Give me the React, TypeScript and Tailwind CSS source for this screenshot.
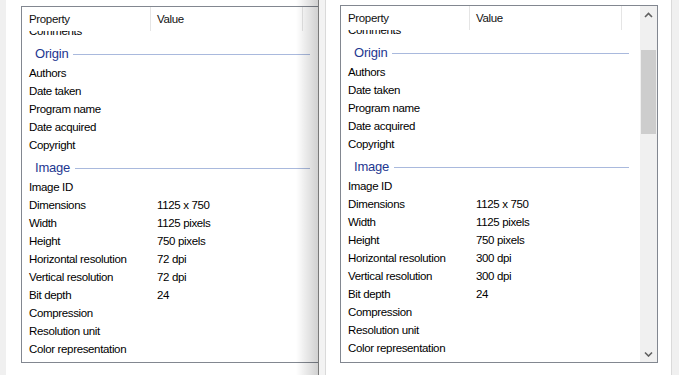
import React from "react";

type Row = { k: string; v?: string } | { group: string };

function rows(res: string): Row[] {
  return [
    { k: "Comments" },
    { group: "Origin" },
    { k: "Authors" },
    { k: "Date taken" },
    { k: "Program name" },
    { k: "Date acquired" },
    { k: "Copyright" },
    { group: "Image" },
    { k: "Image ID" },
    { k: "Dimensions", v: "1125 x 750" },
    { k: "Width", v: "1125 pixels" },
    { k: "Height", v: "750 pixels" },
    { k: "Horizontal resolution", v: res },
    { k: "Vertical resolution", v: res },
    { k: "Bit depth", v: "24" },
    { k: "Compression" },
    { k: "Resolution unit" },
    { k: "Color representation" },
  ];
}

function Chevron({ down }: { down?: boolean }) {
  return (
    <svg width="9" height="6" viewBox="0 0 9 6">
      <polyline
        points={down ? "1,1.5 4.5,5 8,1.5" : "1,5 4.5,1.5 8,5"}
        fill="none"
        stroke="#606060"
        strokeWidth="1.6"
      />
    </svg>
  );
}

function ListView({ res, height }: { res: string; height: string }) {
  return (
    <div
      className={`w-[318px] shrink-0 border border-[#828790] bg-white flex ${height}`}
    >
      <div className="flex-1 flex flex-col min-w-0">
        <div className="h-[24px] shrink-0 flex text-[11.5px] tracking-[-0.35px] text-[#111]">
          <div className="w-[128px] pl-[7px] pt-[2px] flex items-center">Property</div>
          <div className="w-px bg-[#e5e5e5]" />
          <div className="w-[151px] pl-[6px] pt-[2px] flex items-center">Value</div>
          <div className="w-px bg-[#e5e5e5]" />
          <div className="flex-1" />
        </div>
        <div className="flex-1 overflow-hidden">
          <div className="-mt-[9px] flex flex-col">
            {rows(res).map((r, i) =>
              "group" in r ? (
                <div key={i} className="h-[24px] pt-[4px] flex items-center pl-[13px] pr-[11px]">
                  <span className="text-[13px] tracking-[-0.2px] text-[#1e3791]">{r.group}</span>
                  <div className="flex-1 h-px bg-[#a9b9dd] ml-[5px]" />
                </div>
              ) : (
                <div key={i} className="h-[18px] pt-[2px] flex items-center text-[11.5px] tracking-[-0.35px] text-black">
                  <div className="w-[128px] pl-[7px] whitespace-nowrap">{r.k}</div>
                  <div className="pl-[7px] whitespace-nowrap">{r.v ?? ""}</div>
                </div>
              )
            )}
          </div>
        </div>
      </div>
      <div className="w-[17px] shrink-0 bg-[#f0f0f0] flex flex-col">
        <div className="h-[17px] flex items-center justify-center">
          <Chevron />
        </div>
        <div className="flex-1 flex flex-col">
          <div className="mt-[27px] h-[84px] mx-[1px] bg-[#cdcdcd]" />
        </div>
        <div className="h-[17px] flex items-center justify-center">
          <Chevron down />
        </div>
      </div>
    </div>
  );
}

export default function App() {
  return (
    <div
      className="w-[679px] h-[375px] flex overflow-hidden bg-[#f0f0f0]"
      style={{ fontFamily: '"Liberation Sans", Arial, sans-serif' }}
    >
      {/* left window (partly covered) */}
      <div className="w-[318px] shrink-0 relative overflow-hidden flex">
        <div className="w-[6px] shrink-0 bg-[#f0f0f0]" />
        <div className="flex-1 bg-white pl-[15px] pt-[6px] flex">
          <ListView res="72 dpi" height="h-[357px]" />
        </div>
        <div className="absolute top-0 right-0 h-full w-[22px] bg-gradient-to-r from-transparent to-[rgba(0,0,0,0.18)]" />
      </div>
      {/* right window */}
      <div className="flex-1 flex">
        <div className="w-px bg-[#7a7a7a]" />
        <div className="w-[6px] bg-[#f3f3f3]" />
        <div className="w-px bg-[#dadada]" />
        <div className="w-[345px] bg-white pl-[14px] pt-[5px] flex">
          <ListView res="300 dpi" height="h-[358px]" />
        </div>
        <div className="w-px bg-[#dadada]" />
        <div className="flex-1 bg-[#f0f0f0]" />
      </div>
    </div>
  );
}
